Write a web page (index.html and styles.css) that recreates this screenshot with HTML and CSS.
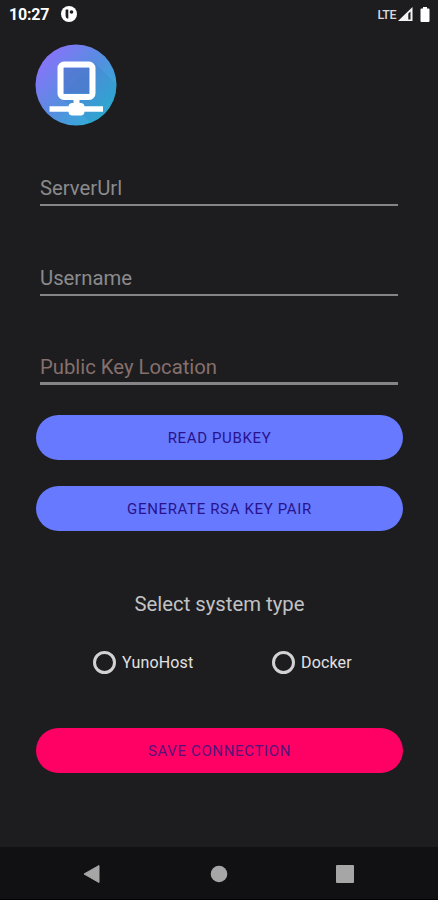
FILE: index.html
```html
<!DOCTYPE html>
<html lang="en">
<head>
<meta charset="utf-8">
<meta name="viewport" content="width=device-width, initial-scale=1">
<title>Connection</title>
<link rel="stylesheet" href="styles.css">
</head>
<body>
<header class="status">
  <span class="clock">10:27</span>
  <svg class="notice" width="16" height="16" viewBox="0 0 16 16"><circle cx="8" cy="8" r="8" fill="#fff"/><path d="M5.2 3.4h2.1v9H6.2Q4.6 11.8 4.6 10V4Q4.6 3.4 5.2 3.4Z" fill="#1d1d1f"/><circle cx="10.5" cy="6" r="1.8" fill="#1d1d1f"/></svg>
  <span class="lte">LTE</span>
  <svg class="signal" width="15" height="14" viewBox="0 0 15 14"><path d="M0 14 14.500 0V14Z" fill="#f5f5f5"/><path d="M10.300 6.500 12.500 4.500V12.500H10.300Z" fill="#1d1d1f"/></svg>
  <svg class="battery" width="10" height="15" viewBox="0 0 10 15"><path d="M3 0H7V1.500H8.500Q9.500 1.500 9.500 2.500V14Q9.500 15 8.500 15H1.500Q.5 15 .5 14V2.500Q.5 1.500 1.500 1.500H3Z" fill="#fff"/></svg>
</header>
<main class="content">
  <svg class="logo" width="82" height="82" viewBox="0 0 82 82">
    <defs>
      <linearGradient id="sky" x1="0.1" y1="0.2" x2="0.85" y2="0.85"><stop offset="0" stop-color="#8575f8"/><stop offset=".5" stop-color="#578de0"/><stop offset="1" stop-color="#2fafd6"/></linearGradient>
      <clipPath id="disc"><circle cx="41" cy="41" r="40.500"/></clipPath>
    </defs>
    <circle cx="41" cy="41" r="40.500" fill="url(#sky)"/>
    <path clip-path="url(#disc)" d="M59 18 90 49V90H66L48 71L25 54Z" fill="#2b75ad" opacity=".16"/>
    <path d="M29 24H54V49H29Z" fill="#4c78cc" opacity=".7"/>
    <rect x="25.500" y="20.500" width="32" height="32.500" rx="3.500" fill="none" stroke="#fff" stroke-width="6"/>
    <path d="M38.500 54H44.500V60H38.500Z" fill="#fff"/>
    <path d="M14.500 62.300H68V67.700H14.500Z" fill="#fff"/>
    <rect x="33.500" y="59" width="16" height="12.500" rx="4" fill="#fff"/>
  </svg>
  <form class="form">
    <div class="field">ServerUrl</div>
    <div class="field">Username</div>
    <div class="field field-key">Public Key Location</div>
    <button type="button" class="button read"><span>READ PUBKEY</span></button>
    <button type="button" class="button generate"><span>GENERATE RSA KEY PAIR</span></button>
    <h1 class="heading">Select system type</h1>
    <div class="options">
      <div class="option"><i class="ring"></i><span>YunoHost</span></div>
      <div class="option"><i class="ring"></i><span>Docker</span></div>
    </div>
    <button type="button" class="button save"><span>SAVE CONNECTION</span></button>
  </form>
</main>
<nav class="nav">
  <svg width="18" height="20" viewBox="0 0 18 20"><path d="M1 10 16 1.500V18.500Z" fill="#a6a6a6" stroke="#a6a6a6" stroke-linejoin="round"/></svg>
  <svg width="18" height="18" viewBox="0 0 18 18"><circle cx="9" cy="9" r="8.300" fill="#a6a6a6"/></svg>
  <svg width="18" height="18" viewBox="0 0 18 18"><rect width="18" height="18" rx="1" fill="#a6a6a6"/></svg>
</nav>
</body>
</html>
```
FILE: styles.css
```css
* { box-sizing: border-box; }
body {
  margin: 0;
  height: 900px;
  display: flex;
  flex-direction: column;
  overflow: hidden;
  background: #1d1d1f;
  color: #e0e0e0;
  font-family: Roboto, "Liberation Sans", sans-serif;
}
.status {
  height: 28px;
  flex: none;
  display: flex;
  align-items: center;
  padding: 0 8px 0 9px;
  color: #fff;
}
.clock { font-size: 16px; font-weight: 700; line-height: 28px; padding-top: 1px; width: 52px; letter-spacing: -0.2px; }
.lte { margin-left: auto; font-size: 12.5px; font-weight: 500; letter-spacing: -0.5px; margin-right: 2px; color: #dadada; }
.signal { margin-right: 7px; }
.content { flex: 1; padding: 16px 35px 0 36px; }
.logo { display: block; margin-left: -1px; }
.form { display: flex; flex-direction: column; margin-top: 40px; }
.field {
  height: 40px;
  margin: 0 5px 49.500px 4px;
  padding-top: 10px;
  border-bottom: 2px solid #858587;
  color: #8b8b8d;
  font-size: 20.300px;
  line-height: 24px;
}
.field-key { height: 40px; margin-bottom: 30px; border-bottom: 3px solid #858587; color: #85706d; }
.button {
  height: 45px;
  padding: 2px 0 0;
  border: 0;
  border-radius: 23px;
  background: #6679ff;
  color: #29138c;
  font: 400 15px/43px Roboto, "Liberation Sans", sans-serif;
  letter-spacing: 0.650px;
}
.generate { margin-top: 26px; }
.save { margin-top: 54px; background: #ff0065; color: #551378; }
.heading { margin: 60px 0 0; text-align: center; font-size: 20.300px; line-height: 26px; font-weight: 400; color: #c2c2c4; }
.options { display: flex; margin: 33px 0 0 57px; }
.option { display: flex; flex: none; align-items: center; gap: 6px; width: 179px; height: 24px; font-size: 16px; letter-spacing: 0.150px; color: #e2e2e4; }
.option:last-child { width: auto; }
.ring { width: 23px; height: 23px; border: 3px solid #d2d2d4; border-radius: 50%; }
.nav {
  height: 53px;
  flex: none;
  display: flex;
  align-items: center;
  justify-content: space-between;
  padding: 0 84px 0 83px;
  background: #111113;
  box-shadow: inset 0 -1px #050006;
}
```
